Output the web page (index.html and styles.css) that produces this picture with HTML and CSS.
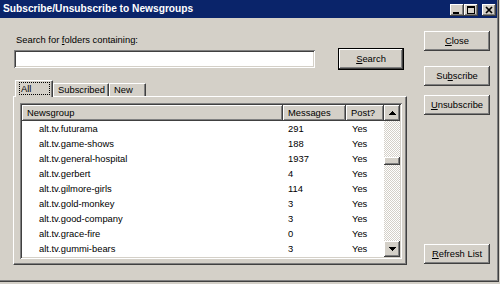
FILE: index.html
```html
<!DOCTYPE html>
<html>
<head>
<meta charset="utf-8">
<link rel="stylesheet" href="styles.css">
</head>
<body>
<div class="window">
  <div class="titlebar">
    <span class="title">Subscribe/Unsubscribe to Newsgroups</span>
    <div class="caption-btns">
      <span class="cbtn"><svg width="14" height="12" viewBox="0 0 14 12" shape-rendering="crispEdges"><rect x="3" y="8" width="6" height="2" fill="#000"/></svg></span>
      <span class="cbtn"><svg width="14" height="12" viewBox="0 0 14 12" shape-rendering="crispEdges"><path d="M3 2h8v8h-8z M4 4v5h6v-5z" fill="#000" fill-rule="evenodd"/></svg></span>
      <span class="cbtn cclose"><svg width="14" height="12" viewBox="0 0 14 12"><path d="M4 3L10 9M10 3L4 9" stroke="#000" stroke-width="1.7"/></svg></span>
    </div>
  </div>
  <div class="content">
    <div class="main">
      <div class="search-label">Search for <u>f</u>olders containing:</div>
      <div class="search-row">
        <div class="field"></div>
        <div class="btn default"><span><u>S</u>earch</span></div>
      </div>
      <div class="tabs">
        <div class="tab active"><span class="focus">All</span></div>
        <div class="tab">Subscribed</div>
        <div class="tab">New</div>
      </div>
      <div class="panel">
        <div class="listview">
          <div class="lv-table">
            <div class="lv-head">
              <div class="hcell c1">Newsgroup</div>
              <div class="hcell c2">Messages</div>
              <div class="hcell c3">Post?</div>
            </div>
            <div class="row"><span class="c1">alt.tv.futurama</span><span class="c2">291</span><span class="c3">Yes</span></div>
            <div class="row"><span class="c1">alt.tv.game-shows</span><span class="c2">188</span><span class="c3">Yes</span></div>
            <div class="row"><span class="c1">alt.tv.general-hospital</span><span class="c2">1937</span><span class="c3">Yes</span></div>
            <div class="row"><span class="c1">alt.tv.gerbert</span><span class="c2">4</span><span class="c3">Yes</span></div>
            <div class="row"><span class="c1">alt.tv.gilmore-girls</span><span class="c2">114</span><span class="c3">Yes</span></div>
            <div class="row"><span class="c1">alt.tv.gold-monkey</span><span class="c2">3</span><span class="c3">Yes</span></div>
            <div class="row"><span class="c1">alt.tv.good-company</span><span class="c2">3</span><span class="c3">Yes</span></div>
            <div class="row"><span class="c1">alt.tv.grace-fire</span><span class="c2">0</span><span class="c3">Yes</span></div>
            <div class="row"><span class="c1">alt.tv.gummi-bears</span><span class="c2">3</span><span class="c3">Yes</span></div>
          </div>
          <div class="scrollbar">
            <div class="sbtn"><svg width="16" height="16" viewBox="0 0 16 16" shape-rendering="crispEdges"><path d="M8 6l-4 4h8z" fill="#000"/></svg></div>
            <div class="track"><div class="thumb"></div></div>
            <div class="sbtn"><svg width="16" height="16" viewBox="0 0 16 16" shape-rendering="crispEdges"><path d="M4 6h8l-4 4z" fill="#000"/></svg></div>
          </div>
        </div>
      </div>
    </div>
    <div class="side">
      <div class="btn sb close-btn"><span><u>C</u>lose</span></div>
      <div class="btn sb sub-btn"><span>Su<u>b</u>scribe</span></div>
      <div class="btn sb unsub-btn"><span><u>U</u>nsubscribe</span></div>
      <div class="btn sb refresh-btn"><span><u>R</u>efresh List</span></div>
    </div>
  </div>
</div>
</body>
</html>
```

FILE: styles.css
```css
* { box-sizing: border-box; }
body {
  margin: 0;
  background: #d4d0c8;
  font-family: "Liberation Sans", Arial, sans-serif;
  font-size: 9.4px;
  color: #000;
}
.window {
  width: 499px;
  height: 282px;
  background: #d4d0c8;
  border-right: 1px solid #404040;
  border-bottom: 1px solid #404040;
  box-shadow: inset -1px -1px #808080;
  overflow: hidden;
}
.titlebar {
  height: 18px;
  margin-right: 1px;
  background: #0a246a;
  display: flex;
  align-items: flex-start;
}
.title {
  color: #fff;
  font-weight: bold;
  font-size: 10.2px;
  line-height: 18px;
  padding-left: 3px;
  flex: 1;
  white-space: nowrap;
}
.caption-btns {
  display: flex;
  margin-top: 4px;
  margin-right: 1px;
}
.cbtn {
  width: 14px;
  height: 12px;
  background: #d4d0c8;
  box-shadow: inset -1px -1px #404040, inset 1px 1px #fff, inset -2px -2px #808080;
  display: block;
}
.cbtn svg { display: block; }
.cclose { margin-left: 4px; }

.content {
  display: flex;
}
.main {
  width: 407px;
  padding-left: 13px;
}
.search-label {
  margin-top: 15px;
  padding-left: 3px;
  line-height: 13px;
}
.search-row {
  display: flex;
  align-items: center;
  margin-top: 2px;
  height: 22px;
}
.field {
  width: 301px;
  height: 18px;
  margin-left: 1px;
  background: #fff;
  box-shadow: inset 1px 1px #808080, inset -1px -1px #fff, inset 2px 2px #404040, inset -2px -2px #d4d0c8;
}
.btn {
  display: flex;
  align-items: center;
  justify-content: center;
  background: #d4d0c8;
  box-shadow: inset -1px -1px #404040, inset 1px 1px #fff, inset -2px -2px #808080;
  line-height: 12px;
  white-space: nowrap;
}
.btn.default {
  width: 66px;
  height: 22px;
  margin-left: 23px;
  border: 1px solid #000;
}
.tabs {
  display: flex;
  align-items: flex-end;
  height: 16px;
  margin-top: 10px;
  margin-left: 2px;
  position: relative;
  z-index: 1;
}
.tab {
  height: 13px;
  padding-left: 4px;
  line-height: 12px;
  border-top: 1px solid #fff;
  border-left: 1px solid #fff;
  border-right: 1px solid #404040;
  box-shadow: inset -1px 0 #808080;
  border-radius: 1px 1px 0 0;
}
.tab:nth-child(2) { width: 56px; }
.tab:nth-child(3) { width: 37px; padding-left: 4px; }
.tab.active {
  width: 38px;
  height: 17px;
  margin-bottom: -1px;
  background: #d4d0c8;
  padding-left: 3px;
  padding-top: 1px;
}
.focus {
  display: inline-block;
  width: 31px;
  height: 13px;
  padding-left: 1px;
  line-height: 11px;
  border: 1px dotted #000;
}
.panel {
  width: 394px;
  height: 169px;
  border-top: 1px solid #fff;
  border-left: 1px solid #fff;
  border-right: 1px solid #404040;
  border-bottom: 1px solid #404040;
  box-shadow: inset -1px -1px #808080;
  padding: 6px 0 0 6px;
}
.listview {
  width: 382px;
  height: 156px;
  background: #fff;
  padding: 2px;
  box-shadow: inset 1px 1px #808080, inset -1px -1px #fff, inset 2px 2px #404040, inset -2px -2px #d4d0c8;
  display: flex;
}
.lv-table {
  flex: 1;
  overflow: hidden;
}
.lv-head {
  display: flex;
  height: 16px;
}
.hcell {
  background: #d4d0c8;
  box-shadow: inset -1px -1px #404040, inset 1px 1px #fff, inset -2px -2px #808080;
  line-height: 16px;
  padding-left: 5px;
}
.c1 { width: 261px; }
.c2 { width: 63px; }
.c3 { width: 38px; }
.row {
  display: flex;
  height: 15px;
  line-height: 15px;
}
.row .c1 { padding-left: 17px; }
.row .c2 { padding-left: 5px; }
.row .c3 { padding-left: 6px; }
.scrollbar {
  width: 16px;
  display: flex;
  flex-direction: column;
}
.sbtn {
  width: 16px;
  height: 16px;
  background: #d4d0c8;
  box-shadow: inset -1px -1px #404040, inset 1px 1px #fff, inset -2px -2px #808080;
}
.sbtn svg { display: block; }
.track {
  flex: 1;
  background: repeating-conic-gradient(#d4d0c8 0 25%, #fff 0 50%) 0 0 / 2px 2px;
}
.thumb {
  margin-top: 36px;
  height: 8px;
  background: #d4d0c8;
  box-shadow: inset -1px -1px #404040, inset 1px 1px #fff, inset -2px -2px #808080;
}
.side {
  display: flex;
  flex-direction: column;
  padding-left: 17px;
}
.sb {
  width: 66px;
  height: 20px;
}
.close-btn { margin-top: 13px; }
.sub-btn { margin-top: 15px; }
.unsub-btn { margin-top: 9px; }
.refresh-btn { margin-top: 129px; }
```
